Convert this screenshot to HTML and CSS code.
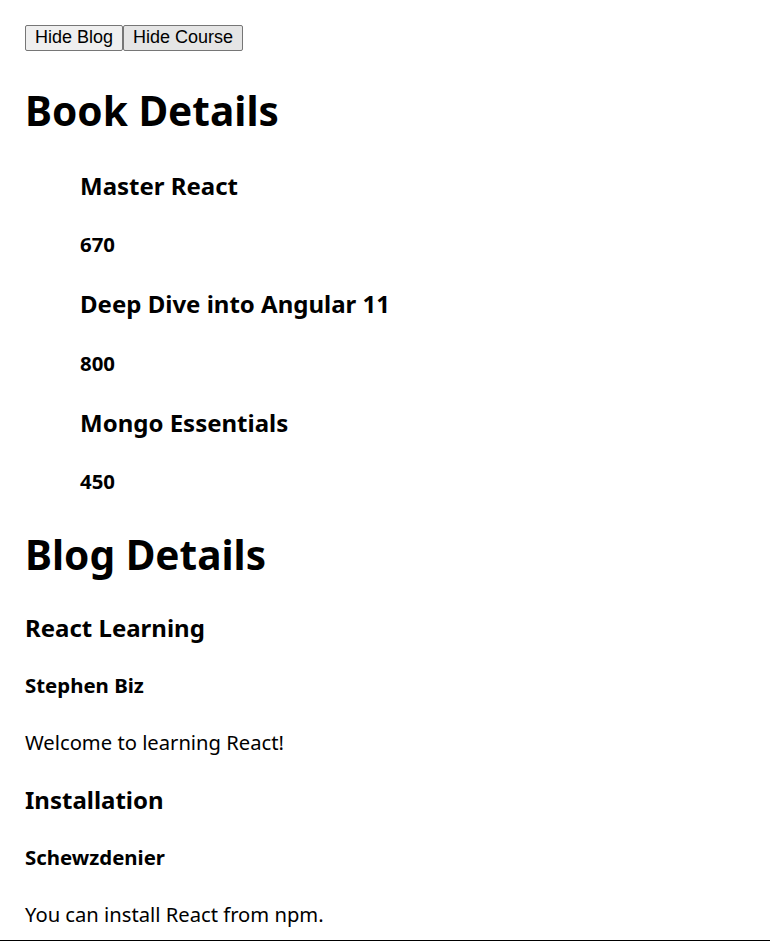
FILE: index.html
```html
<!DOCTYPE html>
<html lang="en">
<head>
<meta charset="utf-8">
<title>Book and Blog Details</title>
<link rel="stylesheet" href="styles.css">
</head>
<body>
<div class="page">
  <div class="toolbar">
    <button class="btn">Hide Blog</button><button class="btn btn-active">Hide Course</button>
  </div>

  <section class="section">
    <h1 class="section-title">Book Details</h1>
    <div class="book-list">
      <h3 class="item-title">Master React</h3>
      <h4 class="item-sub">670</h4>
      <h3 class="item-title">Deep Dive into Angular 11</h3>
      <h4 class="item-sub">800</h4>
      <h3 class="item-title">Mongo Essentials</h3>
      <h4 class="item-sub">450</h4>
    </div>
  </section>

  <section class="section">
    <h1 class="section-title blog-title">Blog Details</h1>
    <div class="blog-list">
      <h3 class="item-title">React Learning</h3>
      <h4 class="item-sub">Stephen Biz</h4>
      <p class="item-text">Welcome to learning React!</p>
      <h3 class="item-title">Installation</h3>
      <h4 class="item-sub">Schewzdenier</h4>
      <p class="item-text">You can install React from npm.</p>
    </div>
  </section>
</div>
<div class="rule"></div>
</body>
</html>
```

FILE: styles.css
```css
html, body {
  margin: 0;
  padding: 0;
  background: #ffffff;
  color: #000000;
}

body {
  font-family: "Noto Sans", "Open Sans", sans-serif;
}

.page {
  padding: 25px 25px 0 25px;
}

.toolbar {
  display: flex;
  height: 26px;
}

.btn {
  font-family: "Liberation Sans", Arial, sans-serif;
  font-size: 18px;
  line-height: 20px;
  color: #000;
  background: #efefef;
  border: 1px solid #767676;
  border-radius: 2px;
  padding: 1px 9px 3px 9px;
  margin: 0;
  height: 26px;
}

.btn-active {
  background: #e5e5e5;
}

.section {
  display: flex;
  flex-direction: column;
}

.section-title {
  font-size: 40.6px;
  font-weight: 700;
  line-height: 40px;
  margin: 40px 0 0 0;
}

.blog-title {
  margin-top: 24px;
}

.book-list {
  display: flex;
  flex-direction: column;
  padding-left: 55px;
  margin-top: 25px;
}

.book-list .item-title,
.book-list .item-sub {
  line-height: 59.2px;
}

.blog-list {
  display: flex;
  flex-direction: column;
  margin-top: 24px;
}

.blog-list .item-title,
.blog-list .item-sub,
.blog-list .item-text {
  line-height: 57.4px;
}

.item-title {
  font-size: 24px;
  font-weight: 700;
  margin: 0;
}

.item-sub {
  font-size: 20.4px;
  font-weight: 700;
  margin: 0;
}

.item-text {
  font-size: 20.2px;
  font-weight: 400;
  margin: 0;
}

.rule {
  border-top: 1px solid #000;
  margin-top: -4px;
}
```
